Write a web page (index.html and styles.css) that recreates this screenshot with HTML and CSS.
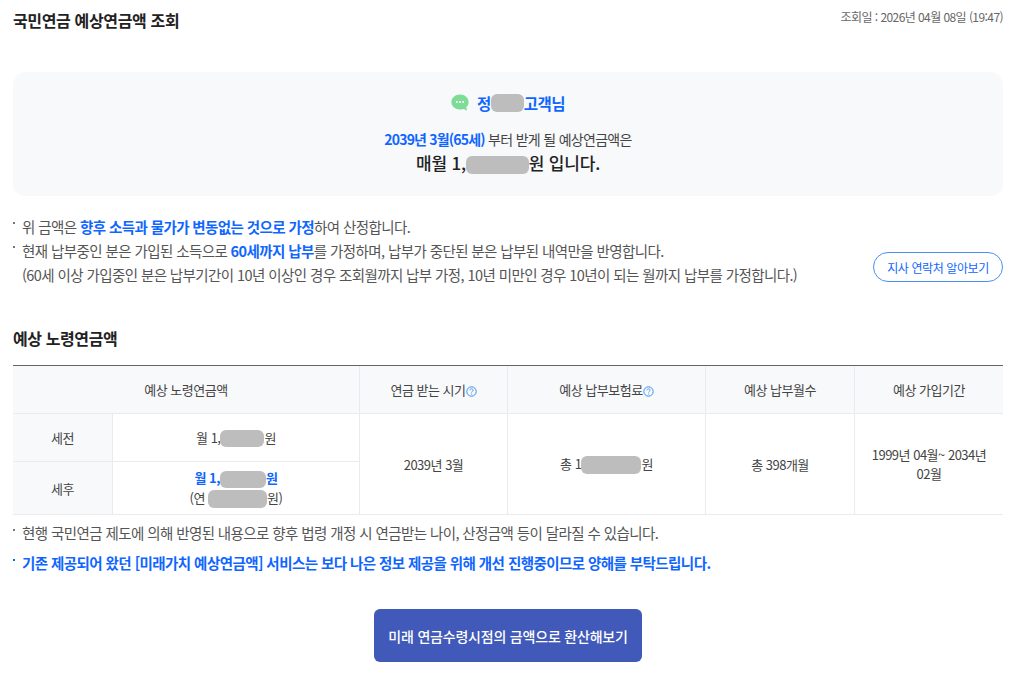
FILE: index.html
```html
<!DOCTYPE html>
<html lang="ko">
<head>
<meta charset="utf-8">
<title>국민연금 예상연금액 조회</title>
<link rel="stylesheet" href="styles.css">
</head>
<body>
<main class="page">
  <header class="top">
    <h1 class="title">국민연금 예상연금액 조회</h1>
    <p class="date">조회일 : 2026년 04월 08일 (19:47)</p>
  </header>

  <section class="summary">
    <p class="name">
      <svg class="chat" viewBox="0 0 18 18" width="18" height="18" aria-hidden="true">
        <path d="M9 .6C4.2.6.4 3.9.4 8.1c0 4.200 3.800 7.500 8.600 7.500 1.300 0 2.500-.2 3.600-.7l3.500 1.900-.8-3.700c1.700-1.400 2.300-3 2.300-5C17.600 3.900 13.800.6 9 .6z" fill="#7fdc96"/>
        <circle cx="5.800" cy="8.100" r="1" fill="#fff"/><circle cx="9" cy="8.100" r="1" fill="#fff"/><circle cx="12.200" cy="8.100" r="1" fill="#fff"/>
      </svg>
      <span>정<i class="blur blur-name"></i>고객님</span>
    </p>
    <p class="when"><b>2039년 3월(65세)</b> 부터 받게 될 예상연금액은</p>
    <p class="amount">매월 1,<i class="blur blur-amount"></i>원 입니다.</p>
  </section>

  <div class="notes-row">
    <ul class="notes">
      <li>위 금액은 <b>향후 소득과 물가가 변동없는 것으로 가정</b>하여 산정합니다.</li>
      <li>현재 납부중인 분은 가입된 소득으로 <b>60세까지 납부</b>를 가정하며, 납부가 중단된 분은 납부된 내역만을 반영합니다.<br>(60세 이상 가입중인 분은 납부기간이 10년 이상인 경우 조회월까지 납부 가정, 10년 미만인 경우 10년이 되는 월까지 납부를 가정합니다.)</li>
    </ul>
    <a class="branch" href="#">지사 연락처 알아보기</a>
  </div>

  <h2 class="subtitle">예상 노령연금액</h2>

  <table class="grid">
    <colgroup>
      <col class="c1"><col class="c2"><col class="c3"><col class="c4"><col class="c5"><col class="c6">
    </colgroup>
    <thead>
      <tr>
        <th colspan="2">예상 노령연금액</th>
        <th>연금 받는 시기<svg class="help" viewBox="0 0 11 11" width="11" height="11" aria-hidden="true"><circle cx="5.500" cy="5.500" r="4.700" fill="none" stroke="#3f8ff0" stroke-width="1"/><path d="M3.900 4.300c.1-1 .8-1.500 1.600-1.500.9 0 1.600.6 1.600 1.400 0 1.100-1.500 1.100-1.500 2.300" fill="none" stroke="#3f8ff0" stroke-width=".9"/><circle cx="5.600" cy="8" r=".6" fill="#3f8ff0"/></svg></th>
        <th>예상 납부보험료<svg class="help" viewBox="0 0 11 11" width="11" height="11" aria-hidden="true"><circle cx="5.500" cy="5.500" r="4.700" fill="none" stroke="#3f8ff0" stroke-width="1"/><path d="M3.900 4.300c.1-1 .8-1.500 1.600-1.500.9 0 1.600.6 1.600 1.400 0 1.100-1.500 1.100-1.500 2.300" fill="none" stroke="#3f8ff0" stroke-width=".9"/><circle cx="5.600" cy="8" r=".6" fill="#3f8ff0"/></svg></th>
        <th>예상 납부월수</th>
        <th>예상 가입기간</th>
      </tr>
    </thead>
    <tbody>
      <tr class="row-a">
        <th>세전</th>
        <td>월 1,<i class="blur blur-a"></i>원</td>
        <td rowspan="2">2039년 3월</td>
        <td rowspan="2">총 1<i class="blur blur-b"></i>원</td>
        <td rowspan="2">총 398개월</td>
        <td rowspan="2">1999년 04월~ 2034년 02월</td>
      </tr>
      <tr class="row-b">
        <th>세후</th>
        <td class="after"><b>월 1,<i class="blur blur-c"></i>원</b><br>(연 <i class="blur blur-d"></i>원)</td>
      </tr>
    </tbody>
  </table>

  <ul class="foot">
    <li>현행 국민연금 제도에 의해 반영된 내용으로 향후 법령 개정 시 연금받는 나이, 산정금액 등이 달라질 수 있습니다.</li>
    <li class="foot-blue">기존 제공되어 왔던 [미래가치 예상연금액] 서비스는 보다 나은 정보 제공을 위해 개선 진행중이므로 양해를 부탁드립니다.</li>
  </ul>

  <div class="cta-row">
    <a class="cta" href="#">미래 연금수령시점의 금액으로 환산해보기</a>
  </div>
</main>
</body>
</html>
```

FILE: styles.css
```css
* { box-sizing: border-box; }
html, body { margin: 0; padding: 0; background: #fff; }
body {
  font-family: "Noto Sans CJK KR", "Noto Sans", sans-serif;
  color: #444;
  font-size: 14px;
  letter-spacing: -0.5px;
}
p, h1, h2, ul { margin: 0; padding: 0; }
ul { list-style: none; }
a { text-decoration: none; }
b { font-weight: 700; }

.page { padding: 8px 21px 0 13px; height: 681px; overflow: hidden; }

.top { display: flex; justify-content: space-between; align-items: flex-start; height: 64px; }
.title { font-size: 16px; line-height: 24px; font-weight: 700; color: #222; letter-spacing: -0.35px; }
.date { font-size: 12px; line-height: 18px; color: #666; letter-spacing: -0.57px; }

.blur {
  display: inline-block;
  background: #bdbdbd;
  border-radius: 6px;
  vertical-align: middle;
}
.blur-name { width: 33px; height: 18px; }
.blur-amount { width: 63px; height: 18px; }
.blur-a { width: 44px; height: 17px; }
.blur-b { width: 60px; height: 18px; }
.blur-c { width: 46px; height: 17px; }
.blur-d { width: 59px; height: 18px; }

.summary {
  height: 124px;
  background: #f8f9fb;
  border-radius: 12px;
  text-align: center;
  padding-top: 19px;
}
.name {
  display: flex;
  justify-content: center;
  align-items: center;
  gap: 8px;
  height: 24px;
  font-size: 15.500px;
  font-weight: 700;
  color: #0f66ff;
}
.name span { display: inline-flex; align-items: center; }
.chat { flex: none; }
.when { margin-top: 14px; line-height: 20px; font-size: 14px; color: #444; letter-spacing: -0.7px; }
.when b { color: #0f66ff; font-weight: 700; letter-spacing: -0.8px; }
.amount { line-height: 28px; font-size: 17px; font-weight: 500; color: #222; letter-spacing: -0.2px; }

.notes-row { position: relative; margin-top: 19px; }
.notes li, .foot li {
  position: relative;
  padding-left: 9px;
  font-size: 14.500px;
  letter-spacing: -0.59px;
  line-height: 24px;
  color: #555;
}
.notes li::before, .foot li::before {
  content: "";
  position: absolute;
  left: 0;
  top: 7px;
  width: 2px;
  height: 2px;
  background: #777;
}
.notes b { color: #0f66ff; font-weight: 700; }
.branch {
  position: absolute;
  right: 0;
  top: 37px;
  width: 130px;
  height: 30px;
  display: flex;
  align-items: center;
  justify-content: center;
  border: 1px solid #4a8ff2;
  border-radius: 15px;
  color: #0f66ff;
  font-size: 12px;
  letter-spacing: -0.4px;
  background: #fff;
}

.subtitle {
  margin-top: 39px;
  font-size: 16px;
  line-height: 24px;
  font-weight: 700;
  color: #222;
  letter-spacing: -0.4px;
}

.grid {
  width: 990px;
  margin-top: 15px;
  table-layout: fixed;
  border-collapse: separate;
  border-spacing: 0;
  border-top: 1px solid #666;
  font-size: 13px;
  letter-spacing: -0.5px;
}
.c1 { width: 100px; }
.c2 { width: 247px; }
.c3 { width: 148px; }
.c4 { width: 198px; }
.c5 { width: 149px; }
.c6 { width: 148px; }
.grid th, .grid td {
  padding: 0 16px;
  text-align: center;
  vertical-align: middle;
  font-weight: 400;
  color: #444;
  border-bottom: 1px solid #e9ebee;
  border-right: 1px solid #e9ebee;
  line-height: 19px;
}
.grid th:last-child, .grid td:last-child { border-right: 0; }
.grid thead th { height: 48px; background: #f8f9fb; }
.grid tbody th { background: #f8f9fb; }
.grid td.after { border-right: 1px solid #e9ebee; }
.row-a > * { height: 48px; }
.row-b > * { height: 53px; }
.grid td b { color: #0f66ff; font-weight: 700; }
.help { vertical-align: -1.500px; }

.foot { margin-top: 6px; }
.foot li + li { margin-top: 6px; }
.foot li::before { top: 8px; }
.foot li.foot-blue { color: #0f66ff; font-weight: 700; letter-spacing: -0.57px; }
.foot li.foot-blue::before { background: #0f66ff; }

.cta-row { display: flex; justify-content: center; margin-top: 34px; }
.cta {
  width: 268px;
  height: 53px;
  display: flex;
  align-items: center;
  justify-content: center;
  background: #415ab9;
  border-radius: 6px;
  color: #fff;
  font-size: 14px;
  font-weight: 500;
  letter-spacing: -0.2px;
}
```
